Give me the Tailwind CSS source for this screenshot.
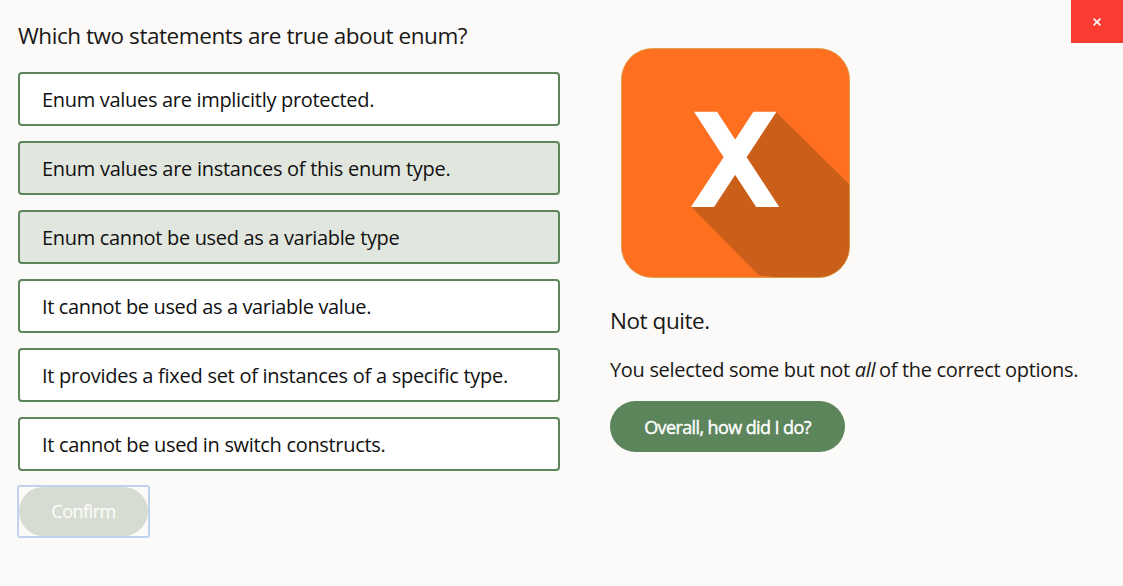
<!DOCTYPE html>
<html lang="en">
<head>
<meta charset="utf-8">
<title>Quiz</title>
<script src="https://cdn.jsdelivr.net/npm/@tailwindcss/browser@4"></script>
</head>
<body class="relative h-[586px] overflow-hidden bg-[#fbfaf8] font-['Open_Sans',sans-serif] text-[20px] text-[#1a1816]">
<button class="absolute right-0 top-0 flex h-[43px] w-[52px] items-center justify-center bg-[#fa3c32]" aria-label="Close">
<svg class="mr-px" width="8" height="8" viewBox="0 0 8 8" stroke="#fff" stroke-width="1.5"><path d="M.6.6l6.8 6.8M7.4.6L.6 7.4"/></svg>
</button>
<main class="flex gap-[50px] pl-[18px]">
<section class="w-[542px] pt-[20px]">
<h1 class="h-[52px] whitespace-nowrap text-[22.5px] leading-[32px] tracking-[-0.44px]"><span>Which two statements are true about enum?</span></h1>
<div class="flex flex-col gap-[15px] whitespace-nowrap leading-[52px] text-[#111]">
<div class="h-[54px] rounded-[4px] border-2 border-[#5c855c] bg-white pl-[22px] tracking-[-0.31px]"><span>Enum values are implicitly protected.</span></div>
<div class="h-[54px] rounded-[4px] border-2 border-[#5c855c] bg-[#e1e6df] pl-[22px] tracking-[-0.28px]"><span>Enum values are instances of this enum type.</span></div>
<div class="h-[54px] rounded-[4px] border-2 border-[#5c855c] bg-[#e1e6df] pl-[22px] tracking-[-0.33px]"><span>Enum cannot be used as a variable type</span></div>
<div class="h-[54px] rounded-[4px] border-2 border-[#5c855c] bg-white pl-[22px] tracking-[-0.36px]"><span>It cannot be used as a variable value.</span></div>
<div class="h-[54px] rounded-[4px] border-2 border-[#5c855c] bg-white pl-[22px] tracking-[-0.27px]"><span>It provides a fixed set of instances of a specific type.</span></div>
<div class="h-[54px] rounded-[4px] border-2 border-[#5c855c] bg-white pl-[22px] tracking-[-0.32px]"><span>It cannot be used in switch constructs.</span></div>
</div>
<div class="-ml-px mt-[14px] h-[53px] w-[133px] rounded-[3px] border-2 border-[#c0d3ee]">
<button class="h-full w-full rounded-full bg-[#d6dcd2] text-[18px] font-medium tracking-[-0.5px] text-[#fbfaf8] [-webkit-text-stroke:0.3px_#fbfaf8]">Confirm</button>
</div>
</section>
<section class="whitespace-nowrap pt-[48px]">
<svg class="ml-[11px] block" width="229" height="230" viewBox="0 0 229 230">
<defs><clipPath id="tile"><rect x=".5" y=".5" width="228" height="229" rx="31"/></clipPath><clipPath id="cross"><rect x="60" y="63.7" width="110" height="95.3"/></clipPath></defs>
<rect x=".5" y=".5" width="228" height="229" rx="31" fill="#ff6f20"/>
<path clip-path="url(#tile)" d="M155 64L229 137V230L159 229.500L138 227.500L70.500 159L114 109Z" fill="#ca5f19"/>
<g clip-path="url(#cross)" stroke="#fff" stroke-width="19.300"><path d="M78.300 54.200L152.700 168.200M150.200 54.200L75.500 168.200"/></g>
<rect x=".5" y=".5" width="228" height="229" rx="31" fill="none" stroke="#d59a3c" stroke-width=".8"/>
</svg>
<h2 class="mt-[27px] text-[22.5px] leading-[32px] tracking-[-0.44px]"><span>Not quite.</span></h2>
<p class="mt-[18px] leading-[30px] tracking-[-0.32px]"><span>You selected some but not <em class="mr-[-1px]">all</em> of the correct options.</span></p>
<button class="mt-[16px] block h-[51px] w-[235px] rounded-full bg-[#5c855c] text-[18px] font-medium leading-[52px] tracking-[-0.6px] text-white [-webkit-text-stroke:0.4px_white]"><span>Overall, how did I do?</span></button>
</section>
</main>
</body>
</html>
